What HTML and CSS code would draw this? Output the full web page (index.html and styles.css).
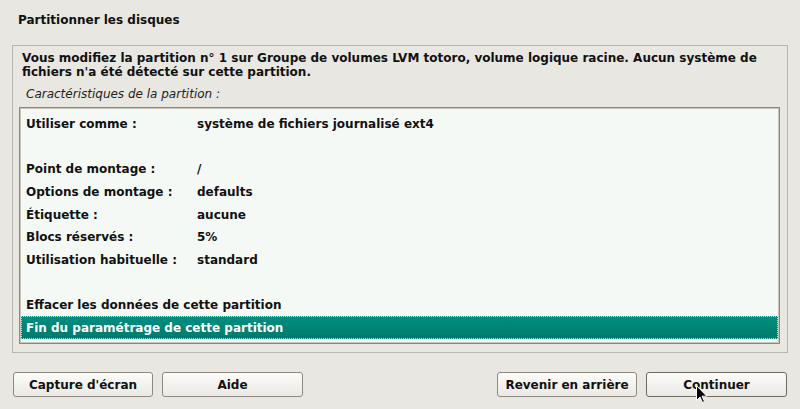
FILE: index.html
```html
<!DOCTYPE html>
<html lang="fr">
<head>
<meta charset="utf-8">
<title>Partitionner les disques</title>
<link rel="stylesheet" href="styles.css">
</head>
<body>
<div class="window">
  <h1 class="title">Partitionner les disques</h1>
  <div class="frame">
    <p class="intro">Vous modifiez la partition n° 1 sur Groupe de volumes LVM totoro, volume logique racine. Aucun système de fichiers n'a été détecté sur cette partition.</p>
    <p class="caption">Caractéristiques de la partition :</p>
    <div class="list">
      <div class="row"><span class="label">Utiliser comme :</span><span class="value">système de fichiers journalisé ext4</span></div>
      <div class="row"></div>
      <div class="row"><span class="label">Point de montage :</span><span class="value">/</span></div>
      <div class="row"><span class="label">Options de montage :</span><span class="value">defaults</span></div>
      <div class="row"><span class="label">Étiquette :</span><span class="value">aucune</span></div>
      <div class="row"><span class="label">Blocs réservés :</span><span class="value">5%</span></div>
      <div class="row"><span class="label">Utilisation habituelle :</span><span class="value">standard</span></div>
      <div class="row"></div>
      <div class="row"><span class="label">Effacer les données de cette partition</span></div>
      <div class="row selected"><span class="label">Fin du paramétrage de cette partition</span></div>
    </div>
  </div>
  <div class="buttons">
    <div class="group">
      <button class="btn btn-capture">Capture d'écran</button>
      <button class="btn btn-help">Aide</button>
    </div>
    <div class="group">
      <button class="btn btn-back">Revenir en arrière</button>
      <button class="btn btn-next">Continuer</button>
    </div>
  </div>
  <svg class="cursor" width="12" height="19" viewBox="0 0 12 19" xmlns="http://www.w3.org/2000/svg">
    <path d="M0.5 0.5 L0.5 15.5 L4 12 L6.5 17.5 L8.5 16.5 L6 11.2 L10.8 11.2 Z" fill="#000" stroke="#fff" stroke-width="1"/>
  </svg>
</div>
</body>
</html>
```
FILE: styles.css
```css
* { box-sizing: border-box; }
html, body {
  margin: 0;
  padding: 0;
  background: #e8e7e1;
}
body {
  width: 800px;
  height: 409px;
  overflow: hidden;
  font-family: "DejaVu Sans", sans-serif;
  font-size: 12px;
  color: #1a1a1a;
}
.window {
  position: relative;
  height: 409px;
}
.title {
  margin: 0;
  padding: 13px 0 0 18px;
  height: 45px;
  font-size: 12px;
  font-weight: bold;
  line-height: 15px;
  color: #111;
}
.frame {
  margin: 0 12px;
  height: 308px;
  border: 1px solid #bab6ab;
  padding: 5px 7px 0 6px;
}
.intro {
  margin: 0 0 0 3px;
  font-weight: bold;
  line-height: 14px;
  color: #111;
}
.caption {
  margin: 8px 0 0 7px;
  font-style: italic;
  line-height: 15px;
  color: #222;
}
.list {
  margin-top: 5px;
  height: 237px;
  background: #f5f9f6;
  border: 1px solid #8d887f;
  box-shadow: inset 0 0 0 1px #c9c5bb;
  padding: 5px 1px 2px;
}
.row {
  display: flex;
  height: 22.6px;
  align-items: center;
  padding-left: 5px;
  font-weight: bold;
  color: #111;
}
.label { width: 171px; flex: none; white-space: nowrap; }
.value { white-space: nowrap; }
.row.selected {
  background: linear-gradient(#008f80, #007a6c);
  color: #ffffff;
  outline: 1px dotted rgba(255,255,255,0.75);
  outline-offset: -1px;
}
.buttons {
  display: flex;
  justify-content: space-between;
  padding: 19px 13px 0 13px;
}
.group { display: flex; gap: 9px; }
.btn {
  height: 25px;
  border: 1px solid #8f8a80;
  border-radius: 3px;
  background: linear-gradient(#fbfbf9, #ebe9e4);
  font-family: "DejaVu Sans", sans-serif;
  font-size: 12px;
  font-weight: bold;
  color: #111;
  padding: 0;
}
.btn-capture { width: 140px; }
.btn-help { width: 141px; }
.btn-back { width: 140px; }
.btn-next { width: 141px; border-color: #6e6a62; }
.cursor {
  position: absolute;
  left: 696px;
  top: 385px;
}
```
